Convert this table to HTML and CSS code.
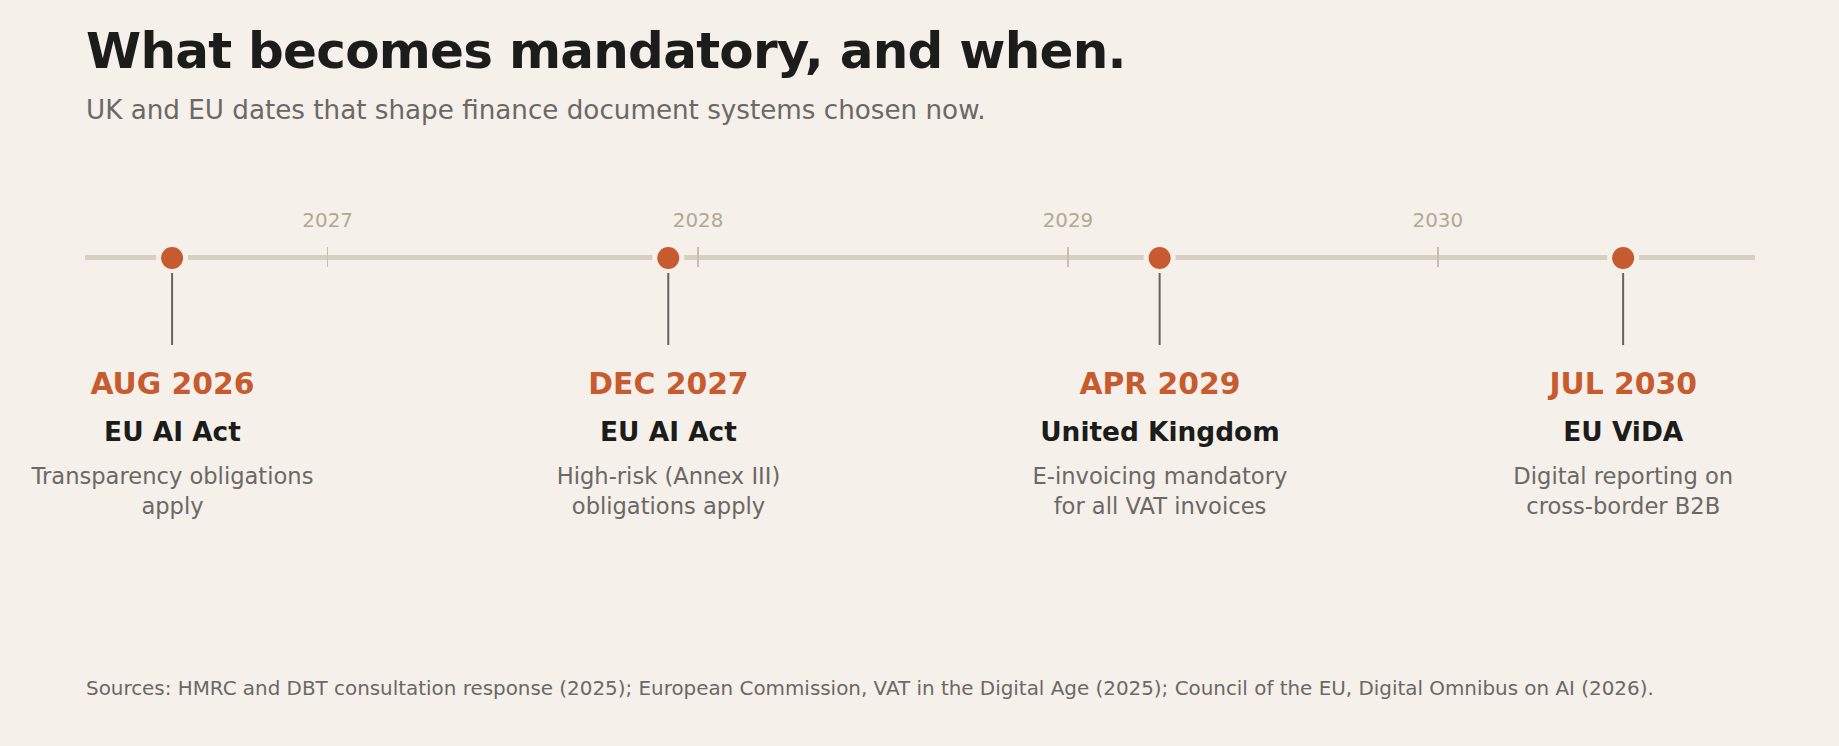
FILE: index.html
```html
<!DOCTYPE html>
<html lang="en">
<head>
<meta charset="utf-8">
<title>What becomes mandatory, and when.</title>
<link rel="stylesheet" href="styles.css">
</head>
<body>
<main class="page">
  <header class="head">
    <h1 class="title">What becomes mandatory, and when.</h1>
    <p class="subtitle">UK and EU dates that shape finance document systems chosen now.</p>
  </header>

  <section class="timeline">
    <div class="years">
      <span class="year" style="left: 14.53%">2027</span>
      <span class="year" style="left: 36.71%">2028</span>
      <span class="year" style="left: 58.86%">2029</span>
      <span class="year" style="left: 81.01%">2030</span>
    </div>
    <div class="axis">
      <span class="tick" style="left: 14.53%"></span>
      <span class="tick" style="left: 36.71%"></span>
      <span class="tick" style="left: 58.86%"></span>
      <span class="tick" style="left: 81.01%"></span>
    </div>

    <div class="event" style="left: 5.24%">
      <span class="dot"></span>
      <span class="stem"></span>
      <div class="date">AUG 2026</div>
      <div class="name">EU AI Act</div>
      <div class="desc">Transparency obligations<br>apply</div>
    </div>
    <div class="event" style="left: 34.94%">
      <span class="dot"></span>
      <span class="stem"></span>
      <div class="date">DEC 2027</div>
      <div class="name">EU AI Act</div>
      <div class="desc">High-risk (Annex III)<br>obligations apply</div>
    </div>
    <div class="event" style="left: 64.37%">
      <span class="dot"></span>
      <span class="stem"></span>
      <div class="date">APR 2029</div>
      <div class="name">United Kingdom</div>
      <div class="desc">E-invoicing mandatory<br>for all VAT invoices</div>
    </div>
    <div class="event" style="left: 92.11%">
      <span class="dot"></span>
      <span class="stem"></span>
      <div class="date">JUL 2030</div>
      <div class="name">EU ViDA</div>
      <div class="desc">Digital reporting on<br>cross-border B2B</div>
    </div>
  </section>

  <footer class="sources">Sources: HMRC and DBT consultation response (2025); European Commission, VAT in the Digital Age (2025); Council of the EU, Digital Omnibus on AI (2026).</footer>
</main>
</body>
</html>
```

FILE: styles.css
```css
* {
  box-sizing: border-box;
}

html,
body {
  margin: 0;
  padding: 0;
  background: #f5f0ea;
}

body {
  font-family: "DejaVu Sans", "Liberation Sans", sans-serif;
  color: #1c1c1a;
  width: 1839px;
  height: 746px;
  overflow: hidden;
}

.page {
  display: flex;
  flex-direction: column;
  padding: 21px 84px 0 86px;
}

.head {
  display: flex;
  flex-direction: column;
}

.title {
  margin: 0;
  font-size: 50px;
  line-height: 60px;
  font-weight: 700;
  letter-spacing: -0.75px;
  color: #1c1c1a;
}

.subtitle {
  margin: 13px 0 0;
  font-size: 26.2px;
  line-height: 32px;
  color: #6b6865;
}

.timeline {
  position: relative;
  margin-top: 83px;
  margin-left: -1px;
  height: 312px;
}

.years {
  position: relative;
  height: 24px;
}

.year {
  position: absolute;
  top: 0;
  transform: translateX(-50%);
  font-size: 19.9px;
  line-height: 24px;
  color: #b2a995;
  white-space: nowrap;
}

.axis {
  position: relative;
  margin-top: 22px;
  height: 5px;
  background: #d8cfc2;
}

.tick {
  position: absolute;
  top: -8px;
  width: 1.5px;
  height: 20px;
  margin-left: -0.75px;
  background: #c9bfb0;
}

.event {
  position: absolute;
  top: 37.5px;
  transform: translateX(-50%);
  display: flex;
  flex-direction: column;
  align-items: center;
  text-align: center;
  white-space: nowrap;
}

.dot {
  width: 22px;
  height: 22px;
  border-radius: 50%;
  background: #c65b2f;
  box-shadow: 0 0 0 5px #f5f0ea;
}

.stem {
  margin-top: 4.5px;
  width: 2px;
  height: 72px;
  background: #666462;
}

.date {
  margin-top: 21px;
  font-size: 29.8px;
  line-height: 36px;
  font-weight: 700;
  color: #c65b2f;
}

.name {
  margin-top: 14px;
  font-size: 26.4px;
  line-height: 32px;
  font-weight: 700;
  color: #1c1c1a;
}

.desc {
  margin-top: 13.4px;
  font-size: 22.6px;
  line-height: 30px;
  color: #6b6865;
}

.sources {
  margin-top: 156px;
  font-size: 19.9px;
  line-height: 24px;
  color: #6b6865;
}
```
